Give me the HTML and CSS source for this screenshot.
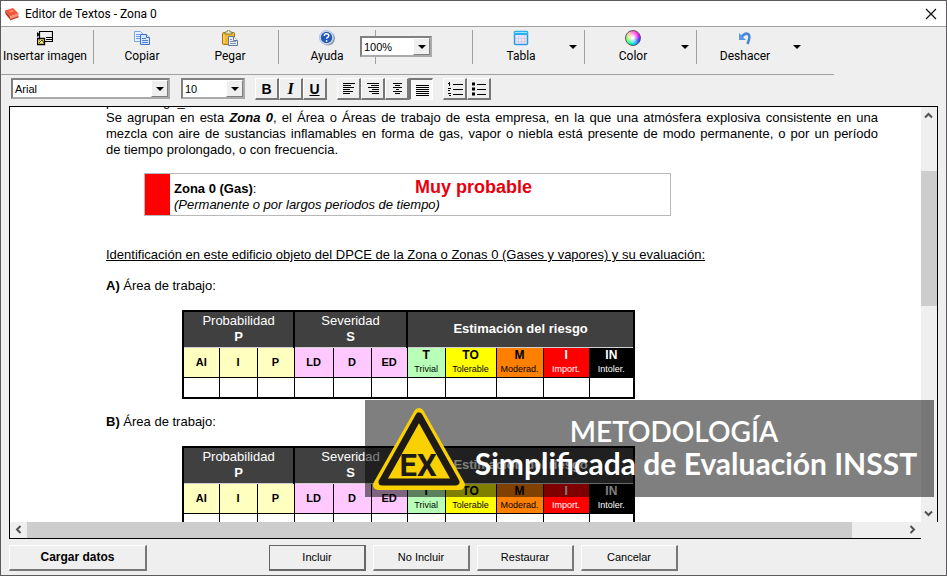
FILE: index.html
```html
<!DOCTYPE html>
<html lang="es">
<head>
<meta charset="utf-8">
<title>Editor de Textos - Zona 0</title>
<link rel="stylesheet" href="styles.css">
</head>
<body>
<div class="window">
  <header class="titlebar">
    <svg class="app-icon" width="16" height="16" viewBox="0 0 16 16"><path d="M0 4.500 8 2l5.500 5.500L5 10.500z" fill="#f2573a"/><path d="M0 4.500l5 6v3L.500 8z" fill="#c23018"/><path d="M5 10.500l8.500-3v3L5 13.500z" fill="#f0907a"/><path d="M5 13l8.500-3v1.500L5 14.500z" fill="#d0432a"/><path d="M3.500 5l4-1.300 1.500 1.500-4 1.300z" fill="#ff8f73"/></svg>
    <h1 class="title">Editor de Textos - Zona 0</h1>
    <button class="close" type="button" aria-label="Cerrar"><svg width="12" height="12" viewBox="0 0 12 12"><path d="M1 1l10 10M11 1 1 11" stroke="#111" stroke-width="1.2" fill="none"/></svg></button>
  </header>

  <div class="toolbar">
    <button class="tool" type="button">
      <svg width="16" height="16" viewBox="0 0 16 16"><path d="M2.500 1.500h13v10H8M2.500 1v8M9 9.500h6M9 7.500h6" fill="none" stroke="#000" stroke-width="1.200"/><path d="M0 2l3 2.500L0 7z"/><path d="M.500 8.500h7v6h-7z" fill="#ffef6a" stroke="#000" stroke-width="1.300"/><path d="M2 13l3-3 2 3M2 10h1" stroke="#333" fill="none"/></svg>
      <span>Insertar imagen</span>
    </button>
    <span class="sep"></span>
    <button class="tool" type="button">
      <svg width="16" height="16" viewBox="0 0 16 16"><path d="M.500 1.500h6l3 3v7h-9z" fill="#e6f0ff" stroke="#7fa6dd"/><path d="M2 4.500h4M2 6.500h4M2 8.500h4" stroke="#6d9ae0"/><path d="M6.500 4.500h6l3 3v7h-9z" fill="#d8e8ff" stroke="#3f6fc0"/><path d="M12.500 4.500v3h3" fill="#fff" stroke="#3f6fc0"/><path d="M8 8.500h4M8 10.500h6M8 12.500h6" stroke="#4c80d8"/></svg>
      <span>Copiar</span>
    </button>
    <button class="tool" type="button">
      <svg width="16" height="16" viewBox="0 0 16 16"><rect x=".5" y="2.500" width="12" height="12" rx="1" fill="#f2b632" stroke="#a87414"/><path d="M3 4V2h2q0-2 1.500-2T8 2h2v2z" fill="#e9edb8" stroke="#6d6a3a" stroke-width=".8"/><path d="M2 5v8" stroke="#ffe08a"/><path d="M6.500 6.500h5l4 4v5h-9z" fill="#e7edf7" stroke="#66799c"/><path d="M11.500 6.500v4h4" fill="#fff" stroke="#66799c"/><path d="M8 9.500h2M8 11.500h6M8 13.500h6" stroke="#7f92b8"/></svg>
      <span>Pegar</span>
    </button>
    <span class="sep"></span>
    <button class="tool" type="button">
      <svg width="16" height="16" viewBox="0 0 16 16"><circle cx="9" cy="8.500" r="7" fill="#8f979f"/><circle cx="7.500" cy="7.500" r="7" fill="#dce6f5" stroke="#a9bbda"/><circle cx="7.500" cy="7.500" r="5.700" fill="#2458bd"/><path d="M5.300 6q0-2.200 2.200-2.200T9.800 5.700q0 1-1.200 1.600-1 .5-1 1.500" fill="none" stroke="#fff" stroke-width="1.500"/><circle cx="7.600" cy="10.900" r=".9" fill="#fff"/></svg>
      <span>Ayuda</span>
    </button>
    <span class="sep"></span>
    <div class="zoom-slot">
      <div class="combo zoom"><select aria-label="Zoom"><option>100%</option></select><span class="drop"></span></div>
    </div>
    <span class="sep"></span>
    <button class="tool" type="button">
      <svg width="16" height="16" viewBox="0 0 16 16"><rect x="1.500" y="1.500" width="13" height="13" rx="1" fill="#e9e6f8" stroke="#2c9be6" stroke-width="1.500"/><path d="M1 1h14v4H1z" fill="#27b0f2"/><path d="M2 2.500h12" stroke="#9be2ff"/><path d="M5.500 5v9M8.500 5v9M11.500 5v9M2 8.500h12M2 11.500h12" stroke="#c9c3e6" stroke-width=".7"/></svg>
      <span>Tabla</span>
    </button>
    <button class="more" type="button" aria-label="Opciones de tabla"></button>
    <span class="sep"></span>
    <button class="tool" type="button">
      <span class="wheel"></span>
      <span>Color</span>
    </button>
    <button class="more" type="button" aria-label="Opciones de color"></button>
    <span class="sep"></span>
    <button class="tool" type="button">
      <svg width="16" height="16" viewBox="0 0 16 16"><path d="M4.500 7Q8 2.500 11 4t-.5 10" fill="none" stroke="#4a86d8" stroke-width="2.600"/><path d="M2 3v7h7z" fill="#5b96e2"/></svg>
      <span>Deshacer</span>
    </button>
    <button class="more" type="button" aria-label="Opciones de deshacer"></button>
  </div>

  <div class="formatbar">
    <div class="combo font"><select aria-label="Fuente"><option>Arial</option></select><span class="drop"></span></div>
    <div class="combo size"><select aria-label="Tamaño"><option>10</option></select><span class="drop"></span></div>
    <div class="group">
      <button class="fmt" type="button"><b>B</b></button>
      <button class="fmt serif" type="button"><i>I</i></button>
      <button class="fmt" type="button"><u>U</u></button>
    </div>
    <div class="group">
      <button class="fmt" type="button" aria-label="Izquierda"><svg width="14" height="14" viewBox="0 0 14 14"><path d="M1 1.500h12M1 3.500h8M1 5.500h11M1 7.500h7M1 9.500h10M1 11.500h7"/></svg></button>
      <button class="fmt" type="button" aria-label="Derecha"><svg width="14" height="14" viewBox="0 0 14 14"><path d="M1 1.500h12M5 3.500h8M2 5.500h11M6 7.500h7M3 9.500h10M6 11.500h7"/></svg></button>
      <button class="fmt" type="button" aria-label="Centrar"><svg width="14" height="14" viewBox="0 0 14 14"><path d="M3 1.500h9M5 3.500h5M3 5.500h9M6 7.500h3M3 9.500h9M5 11.500h5"/></svg></button>
      <button class="fmt on" type="button" aria-label="Justificar" aria-pressed="true"><svg width="14" height="14" viewBox="0 0 14 14"><path d="M1 2.500h13M1 4.500h13M1 6.500h13M1 8.500h13M1 10.500h13M1 12.500h13"/></svg></button>
    </div>
    <div class="group">
      <button class="fmt" type="button" aria-label="Lista numerada"><svg width="16" height="14" viewBox="0 0 16 14"><path d="M6 2.500h10M6 7.500h10M6 12.500h10M1 1.500h2M2.500 0v4M1 6.500h3M1 8.500h2M1 11.500h3M2 13.500h2"/></svg></button>
      <button class="fmt" type="button" aria-label="Lista con viñetas"><svg width="16" height="14" viewBox="0 0 16 14"><path d="M6 2.500h9M6 7.500h9M6 12.500h9"/><path d="M1 2h3M1 7h3M1 12h3" stroke-width="3"/></svg></button>
    </div>
  </div>

  <main class="editor">
    <div class="page">
      <p class="scrolled">por el riesgo_</p>
      <p class="intro">Se agrupan en esta <b><i>Zona 0</i></b>, el Área o Áreas de trabajo de esta empresa, en la que una atmósfera explosiva consistente en una mezcla con aire de sustancias inflamables en forma de gas, vapor o niebla está presente de modo permanente, o por un período de&nbsp;tiempo prolongado, o con frecuencia.</p>
      <div class="zone">
        <div class="swatch"></div>
        <div class="zone-text">
          <p><b>Zona 0 (Gas)</b>:</p>
          <p><i>(Permanente o por largos periodos de tiempo)</i></p>
        </div>
        <strong class="likely">Muy probable</strong>
      </div>
      <p class="lead"><u>Identificación en este edificio objeto del DPCE de la Zona o Zonas 0 (Gases y vapores) y su evaluación:</u></p>
      <p class="area"><b>A)</b> Área de trabajo:</p>
      <table class="risk">
        <colgroup><col class="w36"><col class="w38"><col class="w37"><col class="w39"><col class="w38"><col class="w36"><col class="w38"><col class="w51"><col class="w47"><col class="w46"><col class="w45"></colgroup>
        <thead>
          <tr class="head"><th colspan="3"><span>Probabilidad</span><br>P</th><th colspan="3"><span>Severidad</span><br>S</th><th colspan="5">Estimación del riesgo</th></tr>
          <tr class="levels"><th class="prob">AI</th><th class="prob">I</th><th class="prob">P</th><th class="sev">LD</th><th class="sev">D</th><th class="sev">ED</th><th class="t">T<small>Trivial</small></th><th class="to">TO<small>Tolerable</small></th><th class="m">M<small>Moderad.</small></th><th class="i">I<small>Import.</small></th><th class="in">IN<small>Intoler.</small></th></tr>
        </thead>
        <tbody><tr class="empty"><td></td><td></td><td></td><td></td><td></td><td></td><td></td><td></td><td></td><td></td><td></td></tr></tbody>
      </table>
      <p class="area"><b>B)</b> Área de trabajo:</p>
      <table class="risk">
        <colgroup><col class="w36"><col class="w38"><col class="w37"><col class="w39"><col class="w38"><col class="w36"><col class="w38"><col class="w51"><col class="w47"><col class="w46"><col class="w45"></colgroup>
        <thead>
          <tr class="head"><th colspan="3"><span>Probabilidad</span><br>P</th><th colspan="3"><span>Severidad</span><br>S</th><th colspan="5">Estimación del riesgo</th></tr>
          <tr class="levels"><th class="prob">AI</th><th class="prob">I</th><th class="prob">P</th><th class="sev">LD</th><th class="sev">D</th><th class="sev">ED</th><th class="t">T<small>Trivial</small></th><th class="to">TO<small>Tolerable</small></th><th class="m">M<small>Moderad.</small></th><th class="i">I<small>Import.</small></th><th class="in">IN<small>Intoler.</small></th></tr>
        </thead>
        <tbody><tr class="empty"><td></td><td></td><td></td><td></td><td></td><td></td><td></td><td></td><td></td><td></td><td></td></tr></tbody>
      </table>
    </div>
    <div class="vscroll">
      <svg width="15" height="17" viewBox="0 0 15 17"><path d="M4 10.500 7.500 7l3.500 3.500"/></svg>
      <span class="vgap"></span><span class="vthumb"></span><span class="vrest"></span>
      <svg width="15" height="17" viewBox="0 0 15 17"><path d="M4 6.500 7.500 10 11 6.500"/></svg>
    </div>
    <div class="hscroll">
      <svg width="17" height="15" viewBox="0 0 17 15"><path d="M10.500 4 7 7.500l3.500 3.500"/></svg>
      <span class="hthumb"></span><span class="hrest"></span>
      <svg width="17" height="15" viewBox="0 0 17 15"><path d="M6.500 4 10 7.500 6.500 11"/></svg>
    </div>
    <div class="corner"></div>
  </main>

  <footer class="actions">
    <button class="btn wide" type="button">Cargar datos</button>
    <button class="btn default" type="button">Incluir</button>
    <button class="btn" type="button">No Incluir</button>
    <button class="btn" type="button">Restaurar</button>
    <button class="btn" type="button">Cancelar</button>
  </footer>

  <aside class="banner">
    <svg class="sign" width="94" height="84" viewBox="0 0 94 84"><path d="M47 6 88 78H6z" fill="#f9d100" stroke="#f9d100" stroke-width="10" stroke-linejoin="round"/><path d="M47 9 84 75H10z" fill="#f9d100" stroke="#1d1a18" stroke-width="7" stroke-linejoin="round"/><text x="46" y="69" text-anchor="middle" class="ex">EX</text></svg>
    <div class="banner-text">
      <p class="method">METODOLOGÍA</p>
      <p class="subject">Simplificada de Evaluación INSST</p>
    </div>
  </aside>
</div>
</body>
</html>
```
FILE: styles.css
```css
* { box-sizing: border-box; }
body { margin: 0; font-family: "Liberation Sans", Arial, sans-serif; font-size: 13px; color: #000; }
p, h1 { margin: 0; }
button { font: inherit; color: inherit; padding: 0; border: 0; background: none; }
.window { position: relative; display: flex; flex-direction: column; height: 100vh; background: #efefef; border: 1px solid #5c5a5c; overflow: hidden; }

.titlebar { display: flex; align-items: center; height: 26px; padding: 0 9px 0 4px; background: #fff; border-bottom: 1px solid #a0a0a0; }
.title { flex: 1; margin-left: 4px; font: 12px Roboto, "Noto Sans", sans-serif; }
.close { display: flex; }

.toolbar { display: flex; align-items: flex-start; align-self: flex-start; height: 48px; padding: 3px 30px 0 0; border-bottom: 1px solid #a0a0a0; }
.tool { display: flex; flex-direction: column; align-items: center; width: 88px; font: 12px/20px Roboto, "Noto Sans", sans-serif; white-space: nowrap; }
.sep { width: 1px; height: 34px; margin: 0 4px; background: #a0a0a0; }
.more { width: 15px; height: 34px; display: flex; align-items: center; justify-content: center; }
.more::before, .drop::before { content: ""; border: 4px solid transparent; border-top-color: #000; border-bottom: 0; }
.wheel { width: 16px; height: 16px; border-radius: 50%; border: 1px solid #555; background: radial-gradient(circle, #fff 5%, transparent 65%), conic-gradient(#f6c, #f0f 60deg, #33f 110deg, #0bf 160deg, #0f9 210deg, #9f6 260deg, #fc9 310deg, #f6c); }
.zoom-slot { width: 88px; padding-top: 6px; }
.zoom { width: 72px; margin-left: -20px; position: relative; }

.combo { display: flex; height: 21px; background: #fff; border: 2px solid #808080; border-right-color: #aaa; border-bottom-color: #aaa; }
.combo select { flex: 1; min-width: 0; appearance: none; border: 0; padding: 0 0 0 2px; background: #fff; font: 11px "Liberation Sans", Arial, sans-serif; color: #000; }
.drop { display: flex; align-items: center; justify-content: center; width: 17px; background: #efefef; border: 1px solid; border-color: #fff #808080 #808080 #fff; pointer-events: none; }

.formatbar { display: flex; align-items: flex-start; height: 31px; padding: 3px 10px 0; flex: none; }
.font { width: 159px; }
.size { width: 64px; margin-left: 11px; }
.group { display: flex; margin-left: 10px; }
.fmt { display: flex; align-items: center; justify-content: center; width: 24px; height: 22px; border: 1px solid; border-color: #fff #777 #777 #fff; border-right-width: 2px; border-bottom-width: 2px; font: bold 14px "Liberation Sans", Arial, sans-serif; }
.fmt svg { stroke: #000; fill: none; }
.serif { font: bold 16px "Liberation Serif", serif; }
.on { border: 1px solid; border-color: #777 #fff #fff #777; border-left-width: 2px; border-top-width: 2px; background: #f8f8f8; }

.editor { flex: 1; min-height: 0; display: grid; grid-template-columns: 1fr 16px; grid-template-rows: 1fr 16px; margin: 0 8px; border: 1px solid #000; background: #fff; }
.page { overflow: hidden; padding: 0 43px 0 96px; line-height: 16px; }
.scrolled { margin-top: -13px; }
.intro { text-align: justify; }
.zone { display: flex; width: 527px; height: 43px; margin: 15px 0 0 38px; border: 1px solid #b8b8b8; }
.swatch { width: 25px; background: #f00; }
.zone-text { width: 245px; padding: 7px 0 0 4px; white-space: nowrap; }
.likely { padding-top: 4px; color: #e8000c; font-size: 18px; line-height: 18px; }
.zone + .lead { margin-top: 31px; }
.area { margin-top: 15px; }
.risk { margin: 16px 0 0 76px; width: 452px; table-layout: fixed; border-collapse: collapse; border: 2px solid #000; line-height: 16px; }
.risk th, .risk td { padding: 0; border: 1px solid #000; text-align: center; vertical-align: middle; }
.risk .head th { height: 36px; background: #404040; color: #fff; border: 2px solid #000; border-bottom: 1px solid #d0d0d0; }
.head span { font-weight: normal; }
.levels th { height: 30px; font-size: 12px; line-height: 15px; }
.levels .prob, .levels .sev { font-size: 11px; }
.empty td { height: 21px; }
small { display: block; font-size: 9px; font-weight: normal; line-height: 13px; }
.prob { background: #ffffc0; }
.sev { background: #ffc8ff; }
.t { background: #b8ffb8; }
.to { background: #ff0; }
.m { background: #ff8000; }
.i { background: #f00; color: #fff; }
.in { background: #000; color: #fff; }
.w36 { width: 36px; } .w37 { width: 37px; } .w38 { width: 38px; } .w39 { width: 39px; }
.w45 { width: 45px; } .w46 { width: 46px; } .w47 { width: 47px; } .w51 { width: 51px; }

.vscroll, .hscroll { display: flex; background: #efefef; }
.vscroll { flex-direction: column; }
.vscroll svg, .hscroll svg { flex: none; fill: none; stroke: #505050; stroke-width: 2; }
.vgap { flex: 47; }
.vthumb { flex: 135; background: #cdcdcd; }
.vrest { flex: 199; }
.hthumb { flex: 825; background: #cdcdcd; }
.hrest { flex: 52; }
.corner { background: #efefef; margin: 0 -1px -1px 0; }

.actions { display: flex; align-items: center; height: 36px; padding: 1px 8px 0; flex: none; }
.btn { width: 97px; height: 26px; margin-right: 7px; border: 1px solid; border-color: #fff #777 #777 #fff; border-right-width: 2px; border-bottom-width: 2px; font-size: 11px; }
.wide { width: 138px; margin-right: 122px; font-weight: bold; font-size: 12px; }
.default { border-color: #666; }

.banner { position: absolute; right: 12px; bottom: 78px; display: flex; align-items: center; width: 569px; height: 97px; padding: 0 8px 0 7px; background: rgba(0, 0, 0, .5); color: #fff; }
.sign { flex: none; }
.ex { font: bold 31px Roboto, sans-serif; fill: #1d1a18; }
.banner-text { flex: 1; padding-bottom: 4px; text-align: center; font: bold 30px/32px Lato, sans-serif; white-space: nowrap; }
.method { margin-right: 44px; font-size: 28px; font-weight: 600; }
```
